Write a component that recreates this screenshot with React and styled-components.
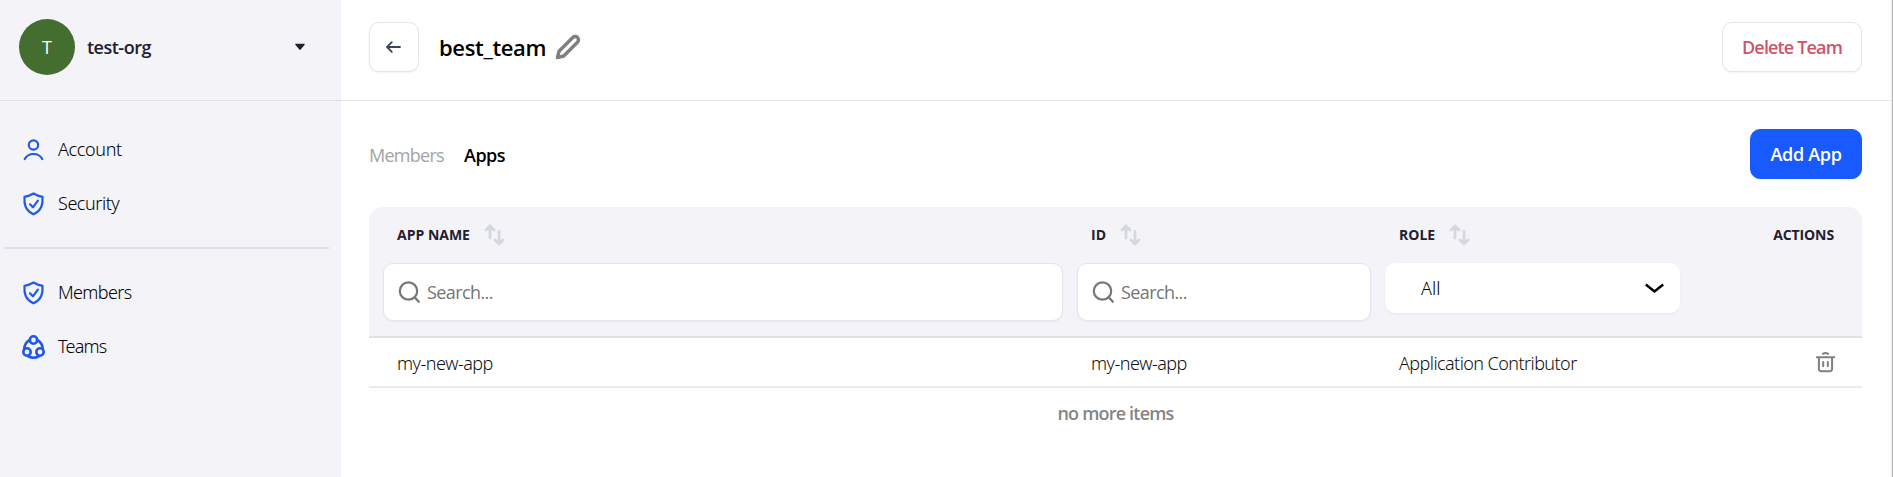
import React from 'react';
import styled, { createGlobalStyle } from 'styled-components';

const GlobalStyle = createGlobalStyle`
  *, *::before, *::after { box-sizing: border-box; }
  body {
    margin: 0;
    background: #fff;
    color: #000;
    font-family: "Segoe UI", "Open Sans", "Noto Sans", sans-serif;
    font-size: 18px;
    overflow: hidden;
  }
  button, input { font: inherit; letter-spacing: inherit; }
`;

const Page = styled.div`
  display: flex;
  height: 477px;
`;

const Sidebar = styled.aside`
  width: 341px;
  flex: none;
  background: #f3f3f8;
`;

const OrgSwitcher = styled.div`
  display: flex;
  align-items: center;
  height: 101px;
  padding: 0 36px 6px 19px;
  border-bottom: 1px solid #e1e0e6;
`;

const Avatar = styled.div`
  display: grid;
  place-items: center;
  width: 56px;
  height: 56px;
  border-radius: 50%;
  background: #446d30;
  color: #fff;
  font-size: 18px;
  font-weight: 400;
`;

const OrgName = styled.span`
  flex: 1;
  margin-left: 12px;
  color: #20202f;
  font-weight: 560;
  letter-spacing: -0.5px;
`;

const MenuGroup = styled.nav`
  padding: ${(p) => p.$top}px 0 ${(p) => p.$bottom || 0}px;
`;

const MenuItem = styled.a`
  display: flex;
  align-items: center;
  gap: 12px;
  height: 54px;
  padding-left: 21px;
  font-family: "Noto Sans", sans-serif;
  font-weight: 300;
  letter-spacing: ${(p) => p.$tracking}px;

  svg { flex: none; }
  span { padding-bottom: 2px; }
`;

const MenuDivider = styled.hr`
  height: 2px;
  margin: 0 12px 0 4px;
  border: 0;
  background: #dfdee9;
`;

const Main = styled.main`
  flex: 1;
  border-right: 1px solid #b9b9b9;
  box-shadow: inset -1px 0 0 #ebebeb;
`;

const TopBar = styled.header`
  display: flex;
  align-items: center;
  height: 101px;
  margin-right: 1px;
  padding: 0 29px 6px 28px;
  border-bottom: 1px solid #e8e8eb;
`;

const Button = styled.button`
  display: flex;
  align-items: center;
  justify-content: center;
  width: ${(p) => p.$width}px;
  height: 50px;
  padding: 0;
  border: 1px solid ${(p) => (p.$primary ? '#195aff' : '#e4e5ec')};
  border-radius: 10px;
  background: ${(p) => (p.$primary ? '#195aff' : '#fff')};
  color: ${(p) => (p.$primary ? '#fff' : '#d1526c')};
  box-shadow: ${(p) => (p.$primary ? 'none' : '0 1px 2px rgba(16, 24, 40, 0.05)')};
  font-weight: ${(p) => (p.$primary ? 600 : 550)};
  letter-spacing: ${(p) => p.$tracking || 0}px;
`;

const Title = styled.h1`
  margin: 0 auto 0 20px;
  display: flex;
  align-items: center;
  gap: 9px;
  font-size: 22px;
  font-weight: 550;
  letter-spacing: -0.35px;

  span { padding-bottom: 1px; }
`;

const Toolbar = styled.div`
  display: flex;
  justify-content: space-between;
  align-items: center;
  padding: 28px 30px 0 28px;
`;

const Tabs = styled.div`
  display: flex;
  gap: 20px;
  padding-top: 2px;
`;

const Tab = styled.a`
  color: ${(p) => (p.$active ? '#000' : '#a3a3a3')};
  font-weight: ${(p) => (p.$active ? 550 : 400)};
  letter-spacing: ${(p) => (p.$active ? -0.5 : -0.72)}px;
`;

const Table = styled.section`
  margin: 28px 30px 0 28px;
`;

const Columns = styled.div`
  display: grid;
  grid-template-columns: 694px 308px 310px 181px;
`;

const TableHead = styled(Columns)`
  height: 131px;
  border-radius: 14px 14px 0 0;
  border-bottom: 2px solid #e1e0e7;
  background: #f3f3f8;
`;

const HeadCell = styled.div`
  padding-left: 14px;
`;

const HeadLabel = styled.div`
  display: flex;
  align-items: center;
  justify-content: ${(p) => (p.$right ? 'flex-end' : 'flex-start')};
  gap: 14px;
  height: 56px;
  padding: 0 ${(p) => (p.$right ? 28 : 14)}px 1px;
  color: #20202f;
  font-size: 14px;
  font-weight: 700;
  letter-spacing: ${(p) => (p.$right ? -0.1 : 0)}px;
`;

const SearchBox = styled.label`
  display: flex;
  align-items: center;
  gap: 7px;
  height: 58px;
  padding-left: 14px;
  border: 1px solid #e4e5ec;
  border-radius: 10px;
  background: #fff;
  box-shadow: 0 1px 2px rgba(16, 24, 40, 0.05);
  letter-spacing: -0.6px;
`;

const SearchInput = styled.input`
  flex: 1;
  min-width: 0;
  padding: 0;
  border: 0;
  outline: 0;
  background: transparent;
  font-weight: 450;
  &::placeholder { color: #757575; opacity: 1; }
`;

const Select = styled.div`
  display: flex;
  align-items: center;
  justify-content: space-between;
  height: 50px;
  margin-right: 1px;
  padding: 0 16px 0 36px;
  border-radius: 10px;
  background: #fff;
  box-shadow: 0 1px 2px rgba(16, 24, 40, 0.05);
  font-family: "Noto Sans", sans-serif;
  font-weight: 300;
`;

const Row = styled(Columns)`
  align-items: center;
  height: 50px;
  border-bottom: 2px solid #ebebed;
  color: #111;
  font-family: "Noto Sans", sans-serif;
  font-weight: 300;
`;

const Cell = styled.div`
  display: flex;
  padding: ${(p) => (p.$right ? '0 26px 0 0' : '1px 0 0 28px')};
  justify-content: ${(p) => (p.$right ? 'flex-end' : 'flex-start')};
  letter-spacing: ${(p) => p.$tracking || 0}px;
`;

const EndNote = styled.div`
  padding-top: 13px;
  color: #858585;
  font-weight: 600;
  letter-spacing: -0.8px;
  text-align: center;
`;

const line = { fill: 'none', strokeLinecap: 'round', strokeLinejoin: 'round' };

const CaretIcon = () => (
  <svg width="10" height="8" viewBox="0 0 10 8" fill="#20202f">
    <path d="M1 .8h8c.7 0 .9.6.5 1.100L5.700 6.500c-.4.500-1 .5-1.400 0L.5 1.900C.1 1.400.3.800 1 .8Z" />
  </svg>
);

const AccountIcon = () => (
  <svg width="25" height="26" viewBox="0 0 25 26" stroke="#2158e8" strokeWidth="2.200" {...line}>
    <circle cx="12.5" cy="8" r="4.700" />
    <path d="M3.700 22c2-3.600 5.200-5 8.800-5s6.800 1.400 8.800 5" />
  </svg>
);

const ShieldIcon = () => (
  <svg width="25" height="26" viewBox="0 0 25 26" stroke="#2158e8" strokeWidth="2.200" {...line}>
    <path d="M12.500 2.500C9.700 4.200 6.800 5.200 3.500 5.800c-.5 7.400.6 13.400 9 17.500 8.400-4.100 9.500-10.100 9-17.500-3.300-.6-6.200-1.600-9-3.300Z" />
    <path d="m9 13.300 2.900 3 5-6.600" />
  </svg>
);

const TeamsIcon = () => (
  <svg width="25" height="26" viewBox="0 0 25 26" stroke="#2158e8" strokeWidth="2.600" {...line}>
    <circle cx="12.500" cy="6" r="3.700" />
    <circle cx="6" cy="18" r="3.700" />
    <circle cx="19" cy="18" r="3.700" />
    <path d="M8.800 5.800C5.500 7.700 3.500 10.800 3.200 14.800M16.200 5.800c3.300 1.900 5.300 5 5.600 9M7.500 22.500c3.100 1.500 6.900 1.500 10 0" />
  </svg>
);

const BackIcon = () => (
  <svg width="18" height="16" viewBox="0 0 18 16" stroke="#3b4358" strokeWidth="1.800" {...line}>
    <path d="M15 8H2.500M6.800 3.200 2 8l4.800 4.800" />
  </svg>
);

const PencilIcon = () => (
  <svg width="26" height="26" viewBox="0 0 26 26" stroke="#808080" strokeWidth="3.500" {...line}>
    <path d="M2.500 23.500 4 17.300 17.800 3.500a3.300 3.300 0 0 1 4.700 4.700L8.700 22Z" />
  </svg>
);

const SortIcon = () => (
  <svg width="21" height="22" viewBox="0 0 21 22" stroke="#d2d7e0" strokeWidth="2.800" {...line}>
    <path d="M6 14V2.200M2 6l4-4 4 4M15 7.500v12.300M11 16l4 4 4-4" />
  </svg>
);

const SearchIcon = () => (
  <svg width="22" height="23" viewBox="0 0 22 23" stroke="#777" strokeWidth="2.200" {...line}>
    <circle cx="10.500" cy="10" r="8.700" />
    <path d="m16.700 16.200 4.100 4.600" />
  </svg>
);

const ChevronIcon = () => (
  <svg width="19" height="11" viewBox="0 0 19 11" stroke="#000" strokeWidth="2.500" fill="none">
    <path d="M.8 1.500 9.500 8.500l8.700-7" />
  </svg>
);

const TrashIcon = () => (
  <svg width="21" height="22" viewBox="0 0 21 22" stroke="#808080" strokeWidth="2" {...line}>
    <path d="M1.800 6.200h17.400M3.900 6.200v11.700a2.300 2.300 0 0 0 2.300 2.300h8.600a2.300 2.300 0 0 0 2.300-2.300V6.200M8.200 11v4.200M12.800 11v4.200" />
    <path d="M8 2.900c1.300-1 3.700-1 5 0" />
  </svg>
);

const Heading = ({ children }) => (
  <HeadLabel>
    {children}
    <SortIcon />
  </HeadLabel>
);

const Search = () => (
  <SearchBox>
    <SearchIcon />
    <SearchInput placeholder="Search..." />
  </SearchBox>
);

export default function App() {
  return (
    <Page>
      <GlobalStyle />
      <Sidebar>
        <OrgSwitcher>
          <Avatar>T</Avatar>
          <OrgName>test-org</OrgName>
          <CaretIcon />
        </OrgSwitcher>
        <MenuGroup $top={22} $bottom={16}>
          <MenuItem $tracking={-0.35}><AccountIcon /><span>Account</span></MenuItem>
          <MenuItem $tracking={-0.45}><ShieldIcon /><span>Security</span></MenuItem>
        </MenuGroup>
        <MenuDivider />
        <MenuGroup $top={17}>
          <MenuItem $tracking={-0.65}><ShieldIcon /><span>Members</span></MenuItem>
          <MenuItem $tracking={-0.8}><TeamsIcon /><span>Teams</span></MenuItem>
        </MenuGroup>
      </Sidebar>
      <Main>
        <TopBar>
          <Button $width={50} aria-label="Back"><BackIcon /></Button>
          <Title><span>best_team</span><PencilIcon /></Title>
          <Button $width={140} $tracking={-0.85}>Delete Team</Button>
        </TopBar>
        <Toolbar>
          <Tabs>
            <Tab>Members</Tab>
            <Tab $active>Apps</Tab>
          </Tabs>
          <Button $primary $width={112} $tracking={-0.3}>Add App</Button>
        </Toolbar>
        <Table>
          <TableHead>
            <HeadCell>
              <Heading>APP NAME</Heading>
              <Search />
            </HeadCell>
            <HeadCell>
              <Heading>ID</Heading>
              <Search />
            </HeadCell>
            <HeadCell>
              <Heading>ROLE</Heading>
              <Select>All<ChevronIcon /></Select>
            </HeadCell>
            <HeadLabel $right>ACTIONS</HeadLabel>
          </TableHead>
          <Row>
            <Cell $tracking={-0.5}>my-new-app</Cell>
            <Cell $tracking={-0.5}>my-new-app</Cell>
            <Cell $tracking={-0.57}>Application Contributor</Cell>
            <Cell $right><TrashIcon /></Cell>
          </Row>
          <EndNote>no more items</EndNote>
        </Table>
      </Main>
    </Page>
  );
}
